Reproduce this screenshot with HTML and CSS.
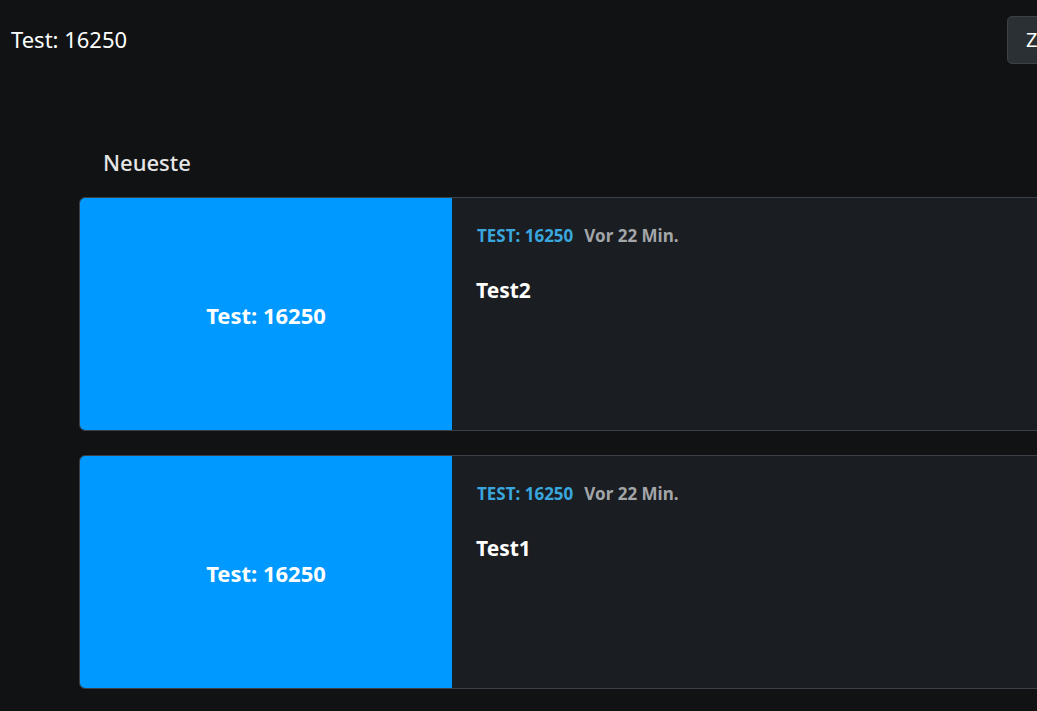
FILE: index.html
```html
<!DOCTYPE html>
<html lang="de">
<head>
<meta charset="utf-8">
<link rel="stylesheet" href="styles.css">
</head>
<body>
<header class="topbar">
  <div class="brand">Test: 16250</div>
  <button class="btn">Zurück</button>
</header>
<main class="content">
  <h2 class="section-title">Neueste</h2>
  <div class="card">
    <div class="card-img">Test: 16250</div>
    <div class="card-body">
      <div class="meta"><span class="cat">TEST: 16250</span><span class="time">Vor 22 Min.</span></div>
      <h3 class="title">Test2</h3>
    </div>
  </div>
  <div class="card">
    <div class="card-img">Test: 16250</div>
    <div class="card-body">
      <div class="meta"><span class="cat">TEST: 16250</span><span class="time">Vor 22 Min.</span></div>
      <h3 class="title">Test1</h3>
    </div>
  </div>
</main>
</body>
</html>
```

FILE: styles.css
```css
html, body {
  margin: 0;
  padding: 0;
  background: #111214;
  overflow: hidden;
  font-family: "Noto Sans", "Open Sans", sans-serif;
  color: #f2f2f2;
}
.topbar {
  display: flex;
  align-items: center;
  justify-content: space-between;
  width: 1120px;
  height: 80px;
  padding: 0 0 0 11px;
  box-sizing: border-box;
}
.brand {
  font-size: 22px;
  color: #ffffff;
  margin-top: -2px;
}
.btn {
  height: 48px;
  margin-top: -1px;
  padding: 0 18px;
  background: #2b3035;
  border: 1px solid #3c4248;
  border-radius: 5px;
  color: #ffffff;
  font-family: inherit;
  font-size: 20px;
  width: 113px;
  text-align: left;
}
.content {
  padding: 67px 0 0 79px;
}
.section-title {
  margin: 0 0 20px 24px;
  font-size: 22px;
  font-weight: 500;
  line-height: 30px;
  color: #e6e6e6;
}
.card {
  display: flex;
  width: 1120px;
  height: 234px;
  border: 1px solid #3a4047;
  border-radius: 6px;
  overflow: hidden;
  margin-bottom: 24px;
  box-sizing: border-box;
  background: #1a1d21;
}
.card-img {
  width: 372px;
  flex: none;
  background: #0099ff;
  display: flex;
  align-items: center;
  justify-content: center;
  font-size: 22px;
  font-weight: 700;
  color: #ffffff;
  padding-top: 1px;
  box-sizing: border-box;
}
.card-body {
  padding: 27px 25px;
}
.meta {
  display: flex;
  gap: 11px;
  font-size: 17px;
  font-weight: 700;
  line-height: 22px;
}
.cat { color: #3aa6de; }
.time { color: #a3a6a9; }
.title {
  margin: 29px 0 0 -1px;
  font-size: 21px;
  font-weight: 700;
  line-height: 28px;
  color: #ffffff;
}
```
